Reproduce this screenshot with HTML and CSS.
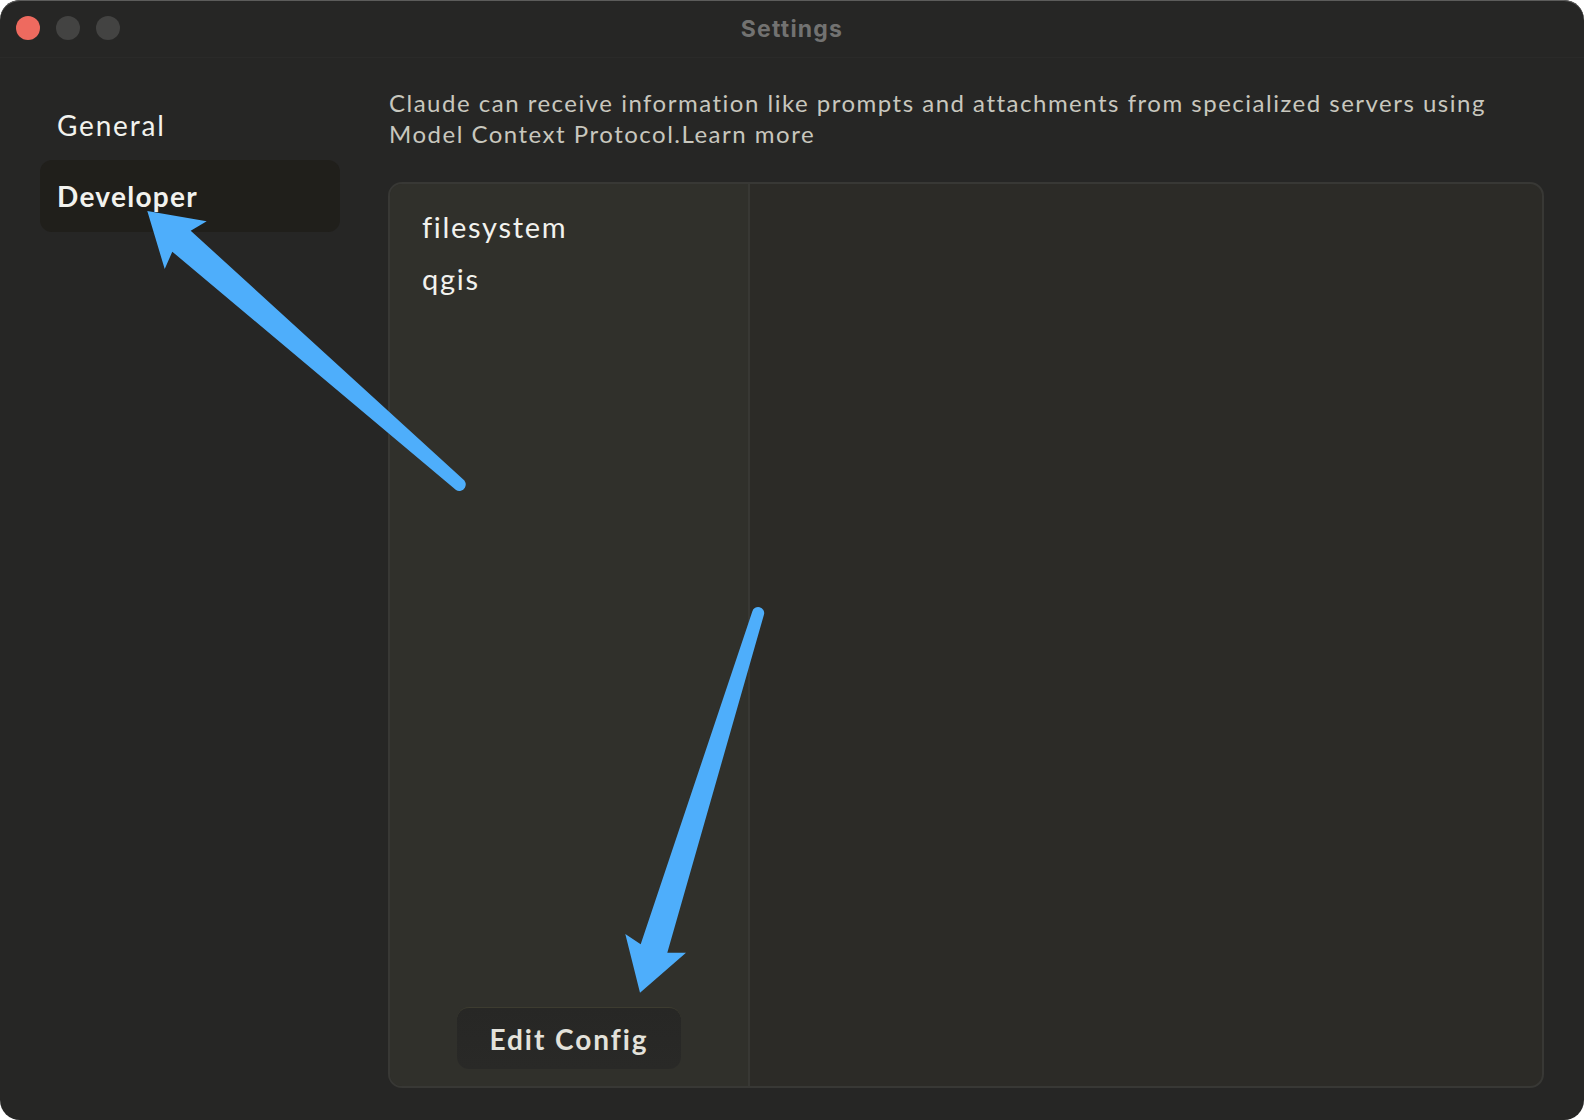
FILE: index.html
```html
<!DOCTYPE html>
<html lang="en">
<head>
<meta charset="utf-8">
<title>Settings</title>
<link rel="stylesheet" href="styles.css">
</head>
<body>
<div class="window">
  <header class="titlebar">
    <div class="lights">
      <span class="light light-close"></span>
      <span class="light"></span>
      <span class="light"></span>
    </div>
    <div class="title">Settings</div>
  </header>
  <div class="body">
    <nav class="nav">
      <div class="nav-item">General</div>
      <div class="nav-item nav-active">Developer</div>
    </nav>
    <main class="content">
      <p class="intro">Claude can receive information like prompts and attachments from specialized servers using<br>Model Context Protocol.Learn more</p>
      <section class="panel">
        <div class="servers">
          <ul class="server-list">
            <li class="server">filesystem</li>
            <li class="server">qgis</li>
          </ul>
          <button class="edit">Edit Config</button>
        </div>
        <div class="detail"></div>
      </section>
    </main>
  </div>
  <svg class="arrows" width="1584" height="1120" viewBox="0 0 1584 1120">
    <path class="arrow" d="M147.3 211L206.7 221.3L190.7 230.7L462.5 478.8A5 5 0 0 1 456 490L172.3 251.7L164.7 269Z"/>
    <path class="arrow" d="M752.3 611.5A6 6 0 0 1 764 614.5L667.3 952.7H686L640 992.7L625.3 934L640.7 944.3Z"/>
  </svg>
</div>
</body>
</html>
```
FILE: styles.css
```css
* { box-sizing: border-box; }
html, body { margin: 0; padding: 0; background: #fff; }
body { width: 1584px; height: 1120px; overflow: hidden; font-family: "Lato", "Liberation Sans", sans-serif; }
.window { position: relative; width: 1584px; height: 1120px; background: #262625; border-radius: 20px; overflow: hidden; box-shadow: inset 0 1px 0 #5c5c5b; display: flex; flex-direction: column; }
.titlebar { position: relative; height: 58px; flex: none; border-bottom: 1px solid #2a2a29; display: flex; align-items: center; justify-content: center; }
.lights { position: absolute; left: 16px; top: 16px; display: flex; gap: 16px; }
.light { width: 24px; height: 24px; border-radius: 50%; background: #434342; }
.light-close { background: #ee6a5f; }
.title { font-family: "Inter", "Liberation Sans", sans-serif; font-size: 23px; font-weight: 700; letter-spacing: 1.2px; color: #727271; margin-top: 1px; }
.body { flex: 1; display: flex; min-height: 0; padding: 29px 40px 32px 40px; }
.nav { width: 300px; flex: none; display: flex; flex-direction: column; padding-top: 3px; }
.nav-item { height: 70px; padding: 0 17px; display: flex; align-items: center; font-size: 28px; letter-spacing: 1.8px; color: #f2f2ee; border-radius: 12px; }
.nav-active { height: 72px; background: #201f1b; font-weight: 700; letter-spacing: 1.3px; }
.content { flex: 1; margin-left: 48px; display: flex; flex-direction: column; min-width: 0; }
.intro { margin: 0 0 33px; padding-left: 1px; font-size: 24px; line-height: 31px; letter-spacing: 1.5px; color: #c8c7be; white-space: nowrap; }
.panel { flex: 1; display: flex; background: #2c2b27; border: 2px solid #383835; border-radius: 14px; overflow: hidden; min-height: 0; }
.servers { width: 360px; flex: none; display: flex; flex-direction: column; align-items: center; background: #30302b; border-right: 2px solid #383834; padding: 16px 0 17px; }
.server-list { list-style: none; margin: 0; padding: 0 0 0 32px; width: 100%; flex: 1; }
.server { height: 52px; display: flex; align-items: center; font-size: 29px; letter-spacing: 1.7px; color: #f2f2ee; }
.edit { width: 224px; height: 62px; background: linear-gradient(#272725, #292927); border: 0; border-top: 1px solid #3d3c30; border-radius: 12px; font: 700 28px "Lato", "Liberation Sans", sans-serif; letter-spacing: 1.95px; color: #e3e2db; }
.detail { flex: 1; }
.arrows { position: absolute; left: 0; top: 0; pointer-events: none; }
.arrow { fill: #4eaefb; }
```
